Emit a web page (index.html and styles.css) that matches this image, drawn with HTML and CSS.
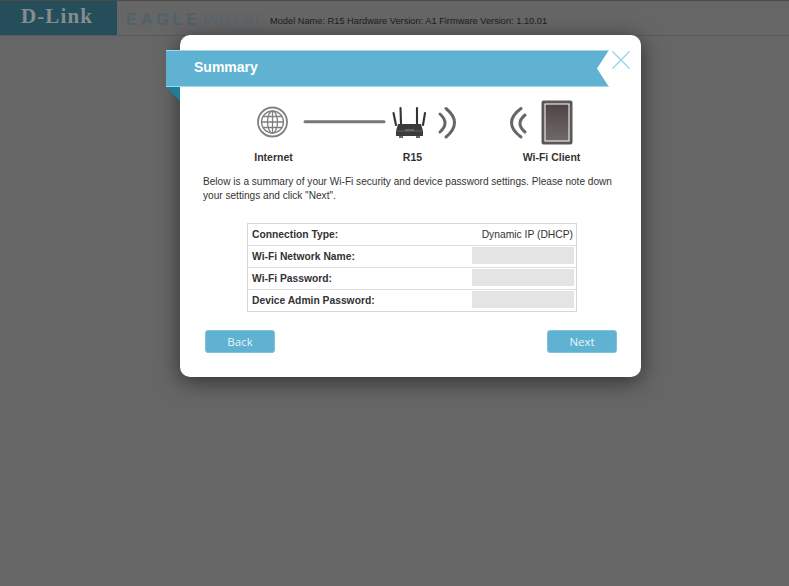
FILE: index.html
```html
<!DOCTYPE html>
<html lang="en">
<head>
  <meta charset="UTF-8">
  <meta name="viewport" content="width=device-width, initial-scale=1.0">
  <title>Summary</title>

  <link rel="stylesheet" href="styles.css">
</head>

<body>
  <!-- Top Bar (dimmed behind the dialog) -->
  <header class="topbar">
    <div class="logo">D-Link</div>
    <div class="brand"><b>EAGLE</b><span>PRO AI</span></div>
    <div class="model-info">Model Name: R15 Hardware Version: A1 Firmware Version: 1.10.01</div>
  </header>

  <!-- Summary Dialog -->
  <section class="dialog">
    <div class="ribbon">Summary</div>
    <div class="ribbon-fold"></div>
    <svg class="close" viewBox="0 0 18 18" width="18" height="18">
      <path d="M0.5 0.5 17.5 17.5M17.5 0.5 0.5 17.5" fill="none" stroke="#8ed4ea" stroke-width="1.2"/>
    </svg>

    <svg class="diagram" viewBox="0 0 330 50" width="330" height="50">
      <!-- Globe -->
      <g fill="none" stroke="#808080">
        <circle cx="22.500" cy="22" r="14.500" stroke-width="1.800"/>
        <circle cx="22.500" cy="22" r="11" stroke-width="1.300"/>
        <ellipse cx="22.500" cy="22" rx="5" ry="11" stroke-width="1.300"/>
        <path d="M22.500 11V33M11.500 22H33.500M13 16.500H32M13 27.500H32" stroke-width="1.300"/>
      </g>
      <!-- Link line -->
      <path d="M55 21.700H134" stroke="#777" stroke-width="3" stroke-linecap="round"/>
      <!-- Router -->
      <g stroke="#333" fill="none" stroke-linecap="round" stroke-width="2.100">
        <path d="M143.500 13 146 25M150.500 8 151 24M167 8 167 24M175 13 173 25"/>
      </g>
      <path d="M148 24H171L173 31V36H146V31Z" fill="#3b3b3b"/>
      <path d="M146.500 31H172.500" stroke="#666" stroke-width="1"/>
      <path d="M155 30H164" stroke="#8a8a8a" stroke-width="1"/>
      <path d="M149 37H153M166 37H170" stroke="#333" stroke-width="1.500"/>
      <!-- Router waves -->
      <g fill="none" stroke="#666" stroke-width="3" stroke-linecap="round">
        <path d="M190 14Q200 23 190 32"/>
        <path d="M196 8.500Q213 22.500 196 37"/>
      </g>
      <!-- Client waves -->
      <g fill="none" stroke="#666" stroke-width="3" stroke-linecap="round">
        <path d="M275 15Q265 23.500 275 32"/>
        <path d="M271 8.500Q252 22.500 271 37"/>
      </g>
      <!-- Tablet -->
      <defs>
        <linearGradient id="screen" x1="0" y1="0" x2="0" y2="1">
          <stop offset="0" stop-color="#4f4444"/>
          <stop offset="1" stop-color="#6e6a68"/>
        </linearGradient>
      </defs>
      <rect x="291.500" y="0.500" width="31" height="44" rx="2" fill="#5d5858"/>
      <rect x="295" y="4" width="24" height="37" fill="url(#screen)" stroke="#fff" stroke-width="1"/>
    </svg>

    <div class="diagram-labels">
      <span>Internet</span>
      <span>R15</span>
      <span>Wi-Fi Client</span>
    </div>

    <p class="intro">Below is a summary of your Wi-Fi security and device password settings. Please note down your settings and click "Next".</p>

    <div class="summary-table">
      <div class="row"><label>Connection Type:</label><span class="value">Dynamic IP (DHCP)</span></div>
      <div class="row"><label>Wi-Fi Network Name:</label><span class="masked"></span></div>
      <div class="row"><label>Wi-Fi Password:</label><span class="masked"></span></div>
      <div class="row"><label>Device Admin Password:</label><span class="masked"></span></div>
    </div>

    <div class="actions">
      <button class="btn">Back</button>
      <button class="btn">Next</button>
    </div>
  </section>
</body>
</html>
```

FILE: styles.css
```css
/* Reset & General */
* {
  margin: 0;
  padding: 0;
  box-sizing: border-box;
}

html, body {
  height: 100%;
}

body {
  font-family: "Liberation Sans", Arial, sans-serif;
  background-color: #666666;
  overflow: hidden;
}

/* Top Bar */
.topbar {
  height: 36px;
  display: flex;
  border-top: 1px solid #4a4a4a;
  border-bottom: 1px solid #5a5a5a;
}

.logo {
  width: 117px;
  background-color: #264d5a;
  color: #848d8f;
  font-family: "Liberation Serif", serif;
  font-weight: bold;
  font-size: 21px;
  letter-spacing: 1.100px;
  line-height: 31px;
  padding-left: 21px;
}

.brand {
  width: 153px;
  padding: 8px 0 0 9px;
  font-size: 16px;
  line-height: 20px;
  color: #4f616a;
  white-space: nowrap;
}

.brand b {
  letter-spacing: 4px;
  margin-right: 2px;
}

.brand span {
  font-family: "Lato", sans-serif;
  font-weight: 400;
  color: #58656c;
  letter-spacing: 1px;
}

.model-info {
  font-size: 9.250px;
  line-height: 12px;
  padding-top: 14px;
  color: #1d1d1d;
  white-space: nowrap;
}

/* Summary Dialog */
.dialog {
  position: absolute;
  left: 180px;
  top: 35px;
  width: 461px;
  height: 342px;
  padding: 65px 23px 0;
  background-color: #ffffff;
  border-radius: 10px;
  box-shadow: 0 4px 22px rgba(0, 0, 0, 0.55);
}

.ribbon {
  position: absolute;
  left: -14px;
  top: 15px;
  width: 443px;
  height: 37px;
  padding-left: 28px;
  background-color: #5fb2d1;
  border-top: 1px solid #a6d8e9;
  border-bottom: 1px solid #a6d8e9;
  color: #ffffff;
  font-size: 14px;
  font-weight: bold;
  line-height: 32px;
  clip-path: polygon(0 0, 100% 0, 431px 50%, 100% 100%, 0 100%);
}

.ribbon-fold {
  position: absolute;
  left: -14px;
  top: 52px;
  border-top: 14px solid #1f7d99;
  border-left: 14px solid transparent;
}

.close {
  position: absolute;
  left: 432px;
  top: 16px;
}

/* Diagram */
.diagram {
  display: block;
  margin-left: 47px;
}

.diagram-labels {
  display: grid;
  grid-template-columns: repeat(3, 139px);
  justify-content: center;
  margin: 1px 0 0 4px;
  font-size: 10.500px;
  font-weight: bold;
  line-height: 13px;
  text-align: center;
  color: #333333;
}

/* Intro Text */
.intro {
  margin-top: 11px;
  font-size: 10.100px;
  line-height: 14px;
  color: #333333;
}

/* Summary Table */
.summary-table {
  width: 330px;
  margin: 20px 0 0 44px;
  border: 1px solid #d6d6d6;
}

.row {
  display: flex;
  align-items: center;
  justify-content: space-between;
  height: 22px;
  padding: 0 2px 0 4px;
  font-size: 10.300px;
  color: #333333;
  border-bottom: 1px solid #dedede;
}

.row:last-child {
  border-bottom: none;
  height: 21px;
}

.row label {
  font-weight: bold;
}

.value {
  padding-right: 1px;
}

.masked {
  width: 102px;
  height: 17px;
  margin-bottom: 2px;
  background-color: #e4e4e4;
}

/* Buttons */
.actions {
  display: flex;
  justify-content: space-between;
  margin: 18px 1px 0 2px;
}

.btn {
  width: 70px;
  height: 23px;
  border: 1px solid #7fc2dc;
  border-radius: 3px;
  background-color: #5fb2d1;
  color: #e8f5fa;
  font-family: "Open Sans", sans-serif;
  font-size: 11.500px;
}
```
